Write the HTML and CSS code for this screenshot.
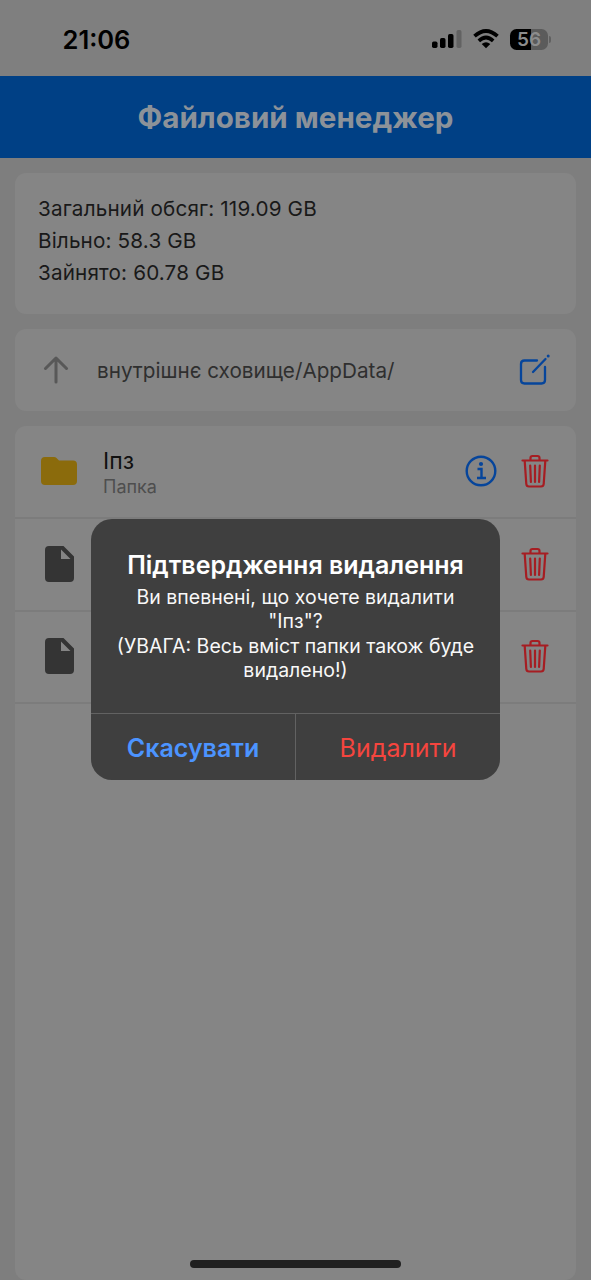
FILE: index.html
```html
<!DOCTYPE html>
<html lang="uk">
<head>
<meta charset="utf-8">
<title>Файловий менеджер</title>
<link rel="stylesheet" href="styles.css">
</head>
<body>
<svg class="defs" width="0" height="0">
  <symbol id="trash" viewBox="0 0 28 34">
    <g fill="none" stroke="currentColor" stroke-width="2.2" stroke-linecap="round" stroke-linejoin="round">
      <path d="M1.500 6.500h25M9.500 6.500V4q0-2 2-2h5q2 0 2 2v2.500M3.700 7l1.600 23q.2 2.500 2.700 2.500h12q2.500 0 2.700-2.500L24.300 7"/>
      <path d="M9.200 11.500l.7 16.500M14 11.500V28M18.800 11.500L18.100 28"/>
    </g>
  </symbol>
  <symbol id="file" viewBox="0 0 29 36">
    <path fill="currentColor" fill-rule="evenodd" d="M4 0h14.500L29 10.500V32q0 4-4 4H4q-4 0-4-4V4q0-4 4-4zM16 3.500V13h9.500z"/>
  </symbol>
</svg>
<main class="screen">
  <div class="status">
    <time class="clock">21:06</time>
    <div class="indicators">
      <svg class="signal" width="30" height="20" viewBox="0 0 30 20">
        <rect x="0" y="12.500" width="5.500" height="6.500" rx="1.700"/>
        <rect x="8" y="9" width="5.500" height="10" rx="1.700"/>
        <rect x="16" y="5" width="5.500" height="14" rx="1.700"/>
        <rect class="dim" x="24.500" y="1" width="5" height="18" rx="1.700"/>
      </svg>
      <svg class="wifi" width="26" height="20" viewBox="0 0 26 20">
        <path fill="none" stroke="#000" stroke-width="3.700" d="M1.500 7.200Q13-3.300 24.500 7.200M5.800 11.800Q13 5.200 20.200 11.800"/>
        <path d="M13 19.200L8.700 14.900Q13 11.400 17.300 14.900z"/>
      </svg>
      <div class="battery"><span class="level">56</span><i class="tip"></i></div>
    </div>
  </div>
  <header class="header"><h1 class="title">Файловий менеджер</h1></header>
  <div class="content">
    <section class="card storage">
      <p>Загальний обсяг: 119.09 GB</p>
      <p>Вільно: 58.3 GB</p>
      <p>Зайнято: 60.78 GB</p>
    </section>
    <section class="card path">
      <svg class="up" width="26" height="28" viewBox="0 0 26 28"><path d="M13 26V2M2.500 12.500L13 2l10.500 10.500"/></svg>
      <span class="path-text">внутрішнє сховище/AppData/</span>
      <svg class="edit" width="32" height="32" viewBox="0 0 32 32">
        <path d="M19 6.500H6.500Q3 6.500 3 10v16Q3 29.500 6.500 29.500h17q3.500 0 3.500-3.500V13M15 18L27.500 5" />
        <circle cx="30.200" cy="2" r="1.500"/>
      </svg>
    </section>
    <section class="card list">
      <div class="row">
        <svg class="folder" width="36" height="30" viewBox="0 0 36 30"><path d="M4 1h9q1.500 0 2.500 1L18 4.500h14q4 0 4 4V25q0 4-4 4H4q-4 0-4-4V5q0-4 4-4z"/></svg>
        <div class="label"><span class="name">Іпз</span><span class="kind">Папка</span></div>
        <svg class="info" width="32" height="32" viewBox="0 0 32 32">
          <circle class="line" cx="16" cy="16" r="14.300"/>
          <circle cx="16" cy="9" r="2.100"/>
          <path class="line" d="M12.500 14h4v9M12 23h9"/>
        </svg>
        <svg class="trash" width="28" height="34"><use href="#trash"/></svg>
      </div>
      <div class="row">
        <svg class="file" width="29" height="36"><use href="#file"/></svg>
        <svg class="trash" width="28" height="34"><use href="#trash"/></svg>
      </div>
      <div class="row">
        <svg class="file" width="29" height="36"><use href="#file"/></svg>
        <svg class="trash" width="28" height="34"><use href="#trash"/></svg>
      </div>
    </section>
  </div>
  <div class="dialog" role="alertdialog">
    <div class="message">
      <h2 class="question">Підтвердження видалення</h2>
      <p>Ви впевнені, що хочете видалити</p>
      <p>"Іпз"?</p>
      <p>(УВАГА: Весь вміст папки також буде</p>
      <p>видалено!)</p>
    </div>
    <div class="actions">
      <button class="action cancel">Скасувати</button>
      <button class="action delete">Видалити</button>
    </div>
  </div>
  <div class="home"></div>
</main>
</body>
</html>
```
FILE: styles.css
```css
* { box-sizing: border-box; }
body, h1, h2, p { margin: 0; }
body { font-family: Inter, "Liberation Sans", sans-serif; background: #7e7e7e; }
.defs { position: absolute; }
.screen { position: relative; width: 591px; height: 1280px; overflow: hidden; display: flex; flex-direction: column; white-space: nowrap; }
.status { height: 76px; flex: none; display: flex; justify-content: space-between; align-items: center; padding: 2px 43px 0 62.5px; background: #7f7f7f; }
.clock { font-size: 25.5px; font-weight: 600; color: #000; }
.indicators { display: flex; align-items: center; }
.signal { margin-right: 11px; }
.dim { fill: #626262; }
.wifi { margin-right: 11px; }
.battery { position: relative; width: 38px; height: 21px; border-radius: 6.5px; background: linear-gradient(90deg, #000 21px, #5b5b5b 21px); }
.level { display: block; text-align: center; font-size: 19px; line-height: 21px; font-weight: 600; color: #8c8c8c; }
.tip { position: absolute; left: 39px; top: 7px; width: 2px; height: 7px; border-radius: 0 2px 2px 0; background: #606060; }
.header { height: 82px; flex: none; background: #004085; display: flex; align-items: center; justify-content: center; }
.title { font-size: 29.6px; font-weight: 700; color: #8c9299; }
.content { flex: 1; padding: 15px 15px 0; display: flex; flex-direction: column; gap: 15px; }
.card { background: #858585; border-radius: 11px; }
.storage { height: 141px; padding: 20px 23px; font-size: 20.7px; line-height: 32px; color: #191919; letter-spacing: 0.15px; }
.path { height: 82px; display: flex; align-items: center; padding: 0 26px 0 28px; }
.up { fill: none; stroke: #585858; stroke-width: 3; stroke-linecap: round; stroke-linejoin: round; }
.path-text { flex: 1; margin-left: 28px; font-size: 20.7px; color: #2f2f2f; }
.edit { fill: #06459b; }
.edit path { fill: none; stroke: #06459b; stroke-width: 2.3; stroke-linecap: round; stroke-linejoin: round; }
.list { flex: 1; padding-top: 1px; }
.row { height: 92.4px; border-bottom: 2px solid #7c7c7c; display: flex; align-items: center; padding: 0 27px 1.5px 26px; }
.folder { fill: #8b6b0c; }
.label { flex: 1; margin-left: 26px; padding-top: 4px; display: flex; flex-direction: column; }
.name { font-size: 23px; line-height: 27px; color: #111; }
.kind { font-size: 18px; line-height: 23px; color: #4e4e4e; }
.info { fill: #06459b; margin-right: 24px; }
.line { fill: none; stroke: #06459b; stroke-width: 2.4; }
.trash { color: #a61d22; }
.file { color: #343434; margin: 0 auto 0 4px; }
.dialog { position: absolute; left: 91px; top: 519px; width: 409px; height: 261px; border-radius: 21px; background: #3f3f3f; overflow: hidden; display: flex; flex-direction: column; text-align: center; }
.message { height: 194px; padding-top: 30px; font-size: 19.5px; line-height: 24.4px; color: #f8f8f8; }
.question { font-size: 25px; line-height: 32px; font-weight: 600; margin-bottom: 4px; color: #fff; }
.actions { flex: 1; display: flex; border-top: 1px solid #626262; }
.action { flex: 1; border: 0; padding: 1px 0 0; background: none; font-family: inherit; font-size: 25px; color: #4c94ff; }
.cancel { font-weight: 600; border-right: 1px solid #626262; }
.delete { color: #f5453e; font-weight: 400; }
.home { position: absolute; left: 190px; top: 1260px; width: 211px; height: 8px; border-radius: 4px; background: #202020; }
```
